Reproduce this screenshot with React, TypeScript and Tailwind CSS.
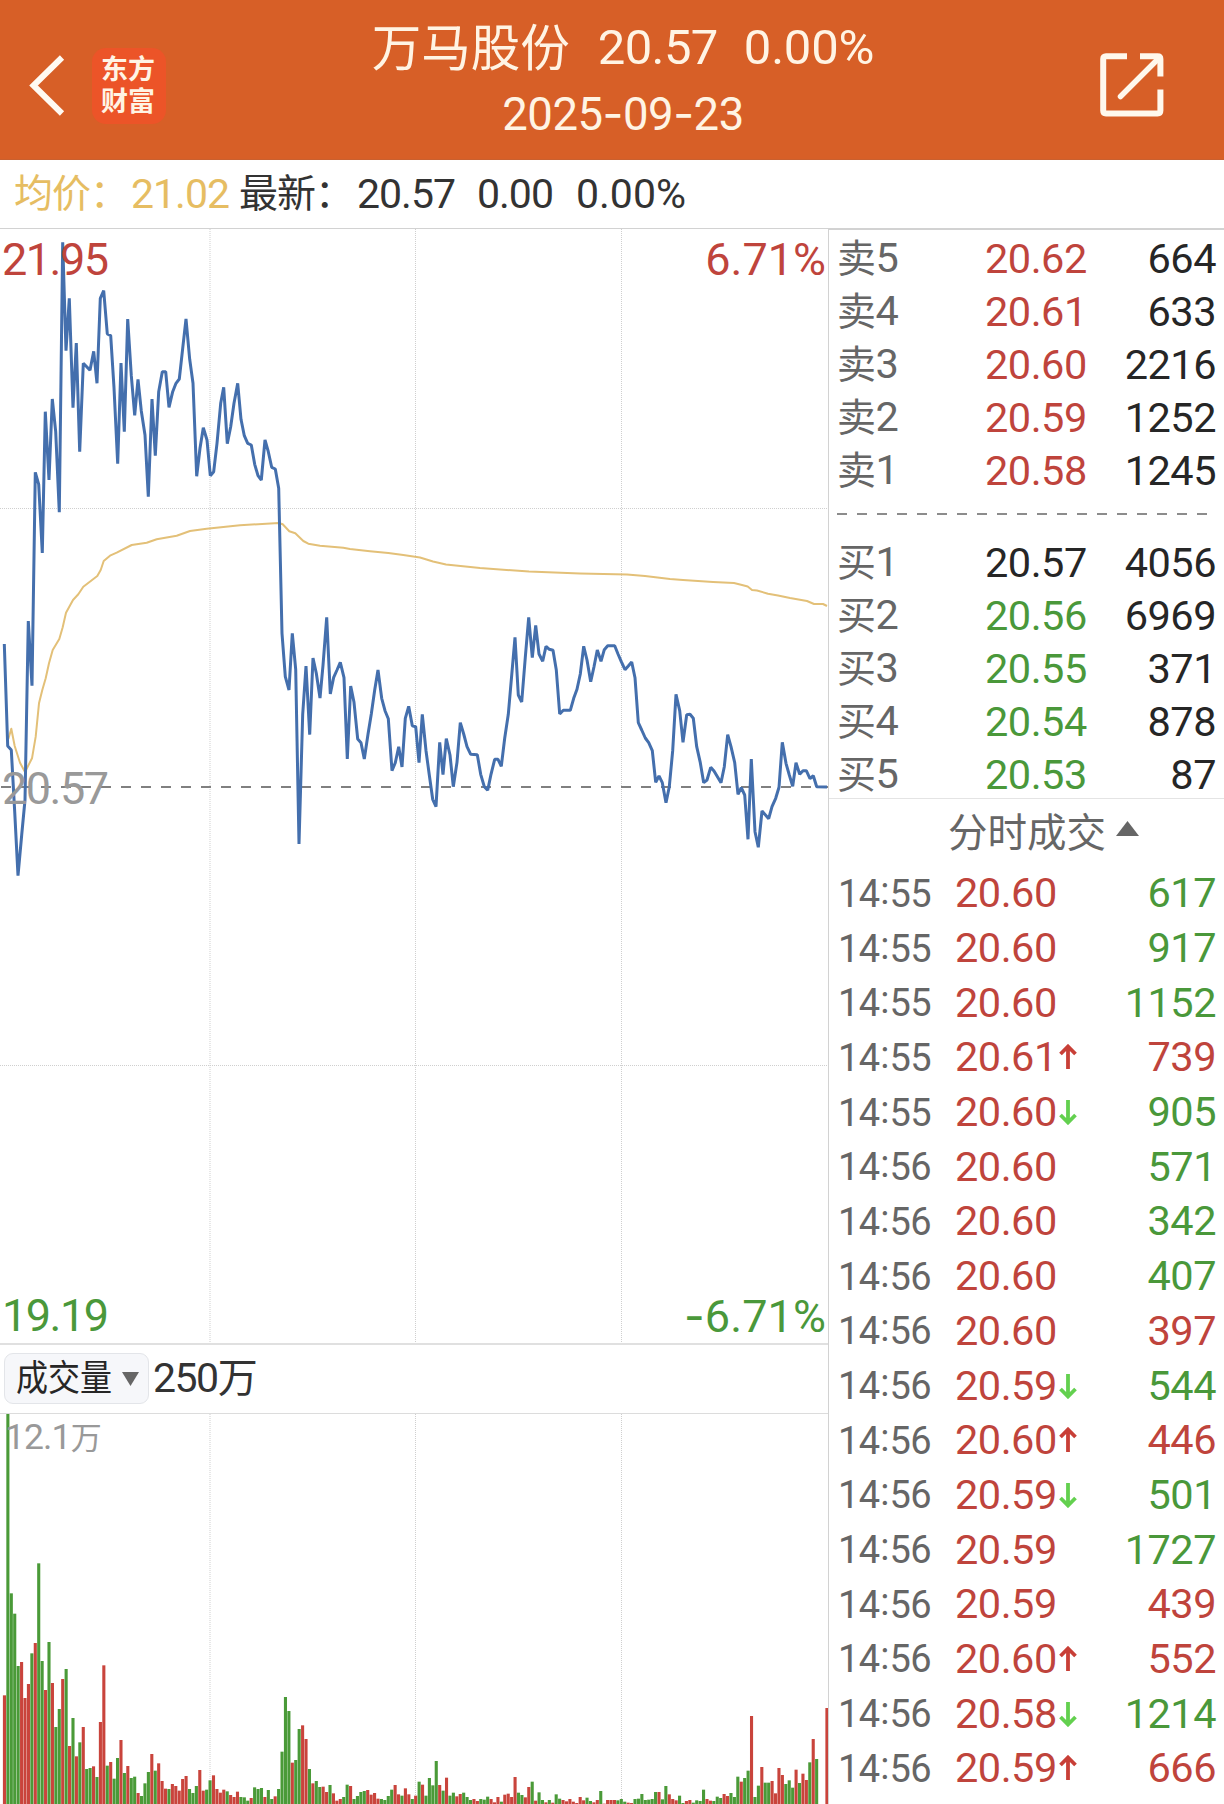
import clsx from 'clsx'

type Tone = 'up' | 'down' | 'flat'

interface Level {
  label: string
  price: string
  volume: string
  tone: Tone
}

interface Tick {
  time: string
  price: string
  volume: string
  side: 'buy' | 'sell'
  move?: 'up' | 'down'
}

const toneClass: Record<Tone, string> = {
  up: 'text-[#bf443c]',
  down: 'text-[#4a983a]',
  flat: 'text-[#262626]',
}

const asks: Level[] = [
  { label: '卖5', price: '20.62', volume: '664', tone: 'up' },
  { label: '卖4', price: '20.61', volume: '633', tone: 'up' },
  { label: '卖3', price: '20.60', volume: '2216', tone: 'up' },
  { label: '卖2', price: '20.59', volume: '1252', tone: 'up' },
  { label: '卖1', price: '20.58', volume: '1245', tone: 'up' },
]

const bids: Level[] = [
  { label: '买1', price: '20.57', volume: '4056', tone: 'flat' },
  { label: '买2', price: '20.56', volume: '6969', tone: 'down' },
  { label: '买3', price: '20.55', volume: '371', tone: 'down' },
  { label: '买4', price: '20.54', volume: '878', tone: 'down' },
  { label: '买5', price: '20.53', volume: '87', tone: 'down' },
]

const ticks: Tick[] = [
  { time: '14:55', price: '20.60', volume: '617', side: 'sell' },
  { time: '14:55', price: '20.60', volume: '917', side: 'sell' },
  { time: '14:55', price: '20.60', volume: '1152', side: 'sell' },
  { time: '14:55', price: '20.61', volume: '739', side: 'buy', move: 'up' },
  { time: '14:55', price: '20.60', volume: '905', side: 'sell', move: 'down' },
  { time: '14:56', price: '20.60', volume: '571', side: 'sell' },
  { time: '14:56', price: '20.60', volume: '342', side: 'sell' },
  { time: '14:56', price: '20.60', volume: '407', side: 'sell' },
  { time: '14:56', price: '20.60', volume: '397', side: 'buy' },
  { time: '14:56', price: '20.59', volume: '544', side: 'sell', move: 'down' },
  { time: '14:56', price: '20.60', volume: '446', side: 'buy', move: 'up' },
  { time: '14:56', price: '20.59', volume: '501', side: 'sell', move: 'down' },
  { time: '14:56', price: '20.59', volume: '1727', side: 'sell' },
  { time: '14:56', price: '20.59', volume: '439', side: 'buy' },
  { time: '14:56', price: '20.60', volume: '552', side: 'buy', move: 'up' },
  { time: '14:56', price: '20.58', volume: '1214', side: 'sell', move: 'down' },
  { time: '14:56', price: '20.59', volume: '666', side: 'buy', move: 'up' },
]

const priceLine = `
4.3,644 7.7,746 11.3,750 14.7,811.7 18,875.7 21.7,835 25,800 28.3,621 32,685.7 35.3,472.3 38.7,484.3 42.3,553
45.3,411.7 49,480 52.3,399 55.7,431.7 59.3,512.3 62.7,242.3 66,350.7 69.3,298.3 73,407.7 76.3,343 79.7,451.7
83.3,363.3 86.7,366.7 90,370.3 93.7,351.3 97,383.3 100.3,298.3 103.7,290.7 107.3,334 110.7,335.7 114,387.7
117.7,463.7 121,363 124.3,431.7 127.7,319 131.3,375.7 134.7,415.3 138,379.3 141.3,411 145,435 148.3,496.7
152,399 155.3,455.7 158.7,391.7 162.3,371.7 165.7,371.7 169,407.3 172.7,391.7 176,383.3 179.3,379 182.7,348.3
186,319 189.7,359.3 193,383.3 196.7,476.3 200,448.3 203.3,427.7 207,440 210.3,475.7 213.7,471.7 217,443.3
220.7,403.3 223.7,387.3 227.3,443.7 230.7,426.7 234,403.3 237.7,383.3 241,419.3 244.3,435.7 247.7,443.3
251.3,445 254.7,464.3 258,475.7 261.3,480 265,440 268.3,451.7 271.7,467.3 275.3,469 278.7,488.3 282,633.3
285.3,676.7 289,690 292.3,633.3 295.7,669.3 299,844 302.7,714.3 306,666 309.7,734.7 313,658 316.3,673.3
320,698 323,665.3 326.7,617.3 330.3,694 333.7,677.3 337,670 340.3,662.3 344,677.7 347.3,759 350.7,686
354,702.3 357.7,739 361,742.7 364.3,759 368,734.3 371.3,714 374.7,690 378,670 381.7,698.3 385,710.7
388.3,718.7 392,770.7 395.3,762.7 398.7,746.7 402,767 405.3,718.3 408.7,706.3 412.3,725.7 415.7,726.7
419,762.7 422.3,714.3 426,750.7 429.3,775 432.7,799.3 436,806.7 439.7,742.3 443,774.7 446.3,738.7 450,755
453.3,786.7 457,762.3 460.3,722.7 463.7,734 467,746.7 470.7,754.3 477.3,754.7 480.7,774.3 484.3,786.7
487.7,790.3 491,774.3 494.7,759.3 498,759.3 501.3,766.3 504.7,738.3 508.3,714.3 515,637.3 518.3,695
521.7,702 525.3,657.3 528.7,617.3 532.3,657.7 535.7,625.3 539,654 542.7,661.3 546,646.3 549.3,649.3
553,650.3 556.3,670 559.7,714 563.3,710.3 570.3,710.3 573.7,698.3 577,689.3 580.3,674 583.7,646.3 587,660
590.7,681.7 594,666.7 597.3,650 601,661.3 604.3,649.7 607.7,645.7 614.7,645.7 618,654 621.3,661.7 625,669.7
628.3,666 631.7,662 635,677.7 638.3,722.7 641.7,730 645.3,738 648.7,742.7 652.3,750.7 655.7,782.3 659,776
662.3,782.7 666,802.7 669.3,786.7 672.7,750.7 676,694.3 679.7,710.7 683,742.3 686.7,714.7 690,714.3
693.3,718.3 696.7,746.7 700.3,762.7 703.7,782.7 707,780 710.7,767.3 714,771 721,782.7 724.3,766.7
727.7,734.7 731,746.7 734.7,762.7 738,794.3 741.3,787.7 744.7,795 748,839.3 751.3,759 755,831.7 758.3,847.3
762,811 768.7,818.7 772,806.7 775.7,798.3 779,787.3 782.3,742.3 786,763.3 789.3,775 792.7,786.3 796,762.7
799.7,774.3 803,770.7 806.3,770.7 810,778.7 813.3,775.7 816.7,786.7 827,787`

const averageLine = `
8.3,739 11.3,728.7 14.7,746 20,762.7 25,772 32,758.3 35.7,736.7 39,703.3 42.3,690 45.7,678.3 49,663.3
52.7,650 59.3,639 62.7,627.3 66,612.7 73,600 78.3,594.3 83.3,586.7 97.3,576 100.7,570 103.7,561 110,555.7
116.7,552.7 131.7,545 146.7,542.7 156.7,539.3 176.7,535.7 190,531 206.7,528.7 240,525.3 278.7,523
282.7,524.3 289.3,531.3 295.3,533.3 303.3,541 308.3,543.7 320,545.7 343.3,547.7 350,549 370,551.3
388.3,553 403.3,555 420,557.5 433,561.5 446,564.5 480,568 529,571.5 580,573.5 627,574.5 645,576 670,579
683,580 713,582 734,583 742,585 747.7,586.5 752,590 757,590.5 768,593.7 778,595.5 790,598 807,601 814,604
823,604 827,606`

// one entry per minute: direction + height in thirds of a pixel
const volumeBars = `
r326 g1170 g632 g571 g414 r426 r318 r360 g452 r483 g722 g429 r342 g486 r363 g231 g285 r375 g405 r174
g258 r143 g185 r231 g105 g108 r113 g81 r246 r416 g115 r126 g76 g138 r192 g93 r114 g78 g82 r33
g24 g62 g96 r150 g100 r122 r69 r46 g45 r60 r54 r40 r75 r84 g45 g33 g54 r102 r40 g43
g71 r86 r45 r34 r43 g38 r27 r21 r37 g21 g20 g10 r18 g50 g45 g48 r21 g42 g15 r23
g45 g157 g321 g279 r124 g132 g225 r236 r195 g105 r62 g69 g51 r52 r36 g57 r32 r10 r15 g21
g58 r54 g15 g24 g36 g39 r42 r28 r33 r16 g15 g12 g24 g43 r57 r29 g25 r47 r29 g15
r25 g67 r58 g25 g78 g56 g129 r57 g40 r79 g25 g34 r23 r30 g34 g21 g12 r15 r9 g15
g13 g22 r15 r5 r21 g7 r28 r31 r21 r81 g34 g27 r20 r51 g67 r10 g35 g12 r5 g12
r4 g29 g16 r12 r8 r15 r7 r3 r21 r11 g19 g9 r5 r12 g39 r1 r12 r12 r12 g11
g15 g7 r4 r3 g15 g16 g30 g12 g13 g15 g36 r36 g14 g54 r29 r15 r11 g25 g3 r9
r12 g4 g11 g9 g43 r15 r10 g9 g22 g18 r30 r24 g33 g21 g82 r67 g78 g100 r264 g21
g55 r111 g64 g64 r69 r32 r108 r87 g60 g71 g49 r103 g63 r91 r72 g125 r195 g135 g0 g0
r288`
  .trim()
  .split(/\s+/)
  .map(s => ({ up: s[0] === 'r', height: Number(s.slice(1)) / 3 }))

const GRID_X = [210, 415.5, 621.5]

function Header() {
  return (
    <header className="flex h-[160px] shrink-0 border-b border-[#c9602f] bg-[#d75f27] text-[#fff4e4]">
      <div className="flex w-[184px] items-start gap-[26px] pl-[28px]">
        <svg width="38" height="64" viewBox="0 0 38 64" className="mt-[53px]" fill="none">
          <path d="M34 4.5 5.5 32.5 34 60.5" stroke="#fffaf2" strokeWidth="6" />
        </svg>
        <div className="mt-[48px] flex h-[76px] w-[74px] flex-col items-center justify-center rounded-[14px] bg-[#ec5428] pr-[2px] text-[27px] leading-[32px] font-bold">
          <span>东方</span>
          <span>财富</span>
        </div>
      </div>
      <div className="flex flex-1 flex-col items-center pt-[16px] whitespace-pre">
        <div className="flex h-[64px] items-center text-[49px] leading-[64px]">
          <span className="pt-[2px] text-[49.5px]">万马股份</span>
          <span className="ml-[28px] tracking-[-0.6px]">20.57</span>
          <span className="ml-[26px] tracking-[-0.2px]">0.00%</span>
        </div>
        <div className="h-[68px] text-[45.5px] leading-[68px] tracking-[-0.5px]">
          2025<Dash />09<Dash />23
        </div>
      </div>
      <div className="w-[162px] pt-[53px] pl-[38px]">
        <svg width="64" height="64" viewBox="0 0 64 64" fill="none" stroke="#fff8ec" strokeWidth="6">
          <path d="M27 3.2H6Q3.2 3.2 3.2 6V57.5Q3.2 60.4 6 60.4H57.5Q60.4 60.4 60.4 57.5V36.5" />
          <path d="M40 3.2H57.5Q60.4 3.2 60.4 6V23.5" />
          <path d="M59 5 20.5 43.5" strokeWidth="5.5" strokeLinecap="round" />
        </svg>
      </div>
    </header>
  )
}

function Dash() {
  return <span className="font-['Inter']">-</span>
}

function Summary() {
  return (
    <div className="flex h-[68px] shrink-0 items-center pb-[1px] pl-[14px] text-[41px] leading-[60px] tracking-[-1px] text-[#333]">
      <div className="flex w-[225px] text-[#e6bd62]">
        <span className="w-[117px] text-[39px]">均价：</span>
        <span>21.02</span>
      </div>
      <span className="w-[118px] text-[39px]">最新：</span>
      <span className="w-[120px]">20.57</span>
      <span className="w-[99px]">0.00</span>
      <span className="tracking-normal">0.00%</span>
    </div>
  )
}

function PriceChart() {
  return (
    <div className="relative h-[1117px] shrink-0 border-t border-b-2 border-t-[#d2d2d2] border-b-[#e0e0e0]">
      <svg width="828" height="1114" viewBox="0 229 828 1114" className="block" fill="none">
        <g stroke="#cfcfcf" strokeDasharray="1 1">
          {GRID_X.map(x => (
            <line key={x} x1={x} x2={x} y1="229" y2="1343" />
          ))}
          <line x1="0" x2="828" y1="508.5" y2="508.5" />
          <line x1="0" x2="828" y1="1065.5" y2="1065.5" />
        </g>
        <line x1="1" x2="828" y1="787" y2="787" stroke="#808080" strokeWidth="2" strokeDasharray="10 10" />
        <polyline points={averageLine} stroke="#e3c078" strokeWidth="2" strokeLinejoin="round" />
        <polyline points={priceLine} stroke="#446fad" strokeWidth="3" strokeLinejoin="bevel" />
      </svg>
      <div className="absolute inset-0 text-[45px] leading-[54px] tracking-[-1.5px]">
        <span className="absolute top-[4px] left-[2px] text-[#bf443c]">21.95</span>
        <span className="absolute top-[4px] right-[2px] tracking-normal text-[#bf443c]">6.71%</span>
        <span className="absolute top-[533px] left-[2px] text-[#999]">20.57</span>
        <span className="absolute top-[1060px] left-[2px] text-[#4a983a]">19.19</span>
        <span className="absolute top-[1060px] right-[2px] tracking-[0.1px] text-[#4a983a]">
          <Dash />6.71%
        </span>
      </div>
    </div>
  )
}

function VolumeBar() {
  return (
    <div className="flex h-[68px] shrink-0 items-center pb-[1px] pl-[4px] text-[#333]">
      <div className="flex h-[51px] w-[145px] items-center rounded-[9px] border border-[#e3e5e9] bg-[#f6f7fa] pl-[11px]">
        <span className="w-[106px] origin-left scale-x-[0.89] text-[36px] leading-[48px] whitespace-nowrap text-[#262626]">成交量</span>
        <svg width="17" height="14" viewBox="0 0 17 14">
          <path d="M0 0H17L8.5 14Z" fill="#666" />
        </svg>
      </div>
      <span className="ml-[4px] text-[41px] leading-[60px] tracking-[-1.5px]">
        250<span className="text-[40px]">万</span>
      </span>
    </div>
  )
}

function VolumeChart() {
  return (
    <div className="relative h-[391px] shrink-0 border-t border-[#dcdcdc]">
      <svg width="828" height="390" viewBox="0 0 828 390" className="block">
        <g stroke="#cfcfcf" strokeDasharray="1 1">
          {GRID_X.map(x => (
            <line key={x} x1={x} x2={x} y1="0" y2="390" />
          ))}
        </g>
        {volumeBars.map((bar, i) => (
          <rect
            key={i}
            x={2.9 + i * 3.427}
            y={390 - bar.height}
            width="3.1"
            height={bar.height}
            fill={bar.up ? '#c9443c' : '#4a9a38'}
          />
        ))}
      </svg>
      <span className="absolute top-0 left-[5px] text-[35.5px] leading-[46px] tracking-[-0.9px] text-[#999]">
        12.1<span className="text-[31px]">万</span>
      </span>
    </div>
  )
}

function LevelRow({ level }: { level: Level }) {
  return (
    <div className="flex h-[53.1px] items-center pr-[8px] pl-[8px] text-[41.5px] leading-[53px] tracking-[-0.5px]">
      <span className="w-[148px] text-[#666]">
        <span className="text-[39px]">{level.label[0]}</span>
        {level.label[1]}
      </span>
      <span className={toneClass[level.tone]}>{level.price}</span>
      <span className="ml-auto text-[#262626]">{level.volume}</span>
    </div>
  )
}

function MoveArrow({ move }: { move: 'up' | 'down' }) {
  return (
    <svg width="18" height="26" viewBox="0 0 18 26" fill="none" className="ml-[2px]">
      <path
        d={move === 'up' ? 'M9 25V2.5M1.5 10 9 2.5 16.5 10' : 'M9 1V23.5M1.5 16 9 23.5 16.5 16'}
        stroke={move === 'up' ? '#c83f37' : '#63d04f'}
        strokeWidth="3.8"
      />
    </svg>
  )
}

function TickRow({ tick }: { tick: Tick }) {
  const [hour, minute] = tick.time.split(':')
  return (
    <div className="flex h-[54.7px] items-center pr-[8px] pl-[9px] text-[41.5px] leading-[54px] tracking-[-0.5px]">
      <span className="w-[117px] pt-[1px] text-[38px] text-[#666]">
        {hour}
        <span className="relative -top-[3px] mx-[0.5px]">:</span>
        {minute}
      </span>
      <span className="text-[#bf443c]">{tick.price}</span>
      {tick.move && <MoveArrow move={tick.move} />}
      <span className={clsx('ml-auto', tick.side === 'buy' ? 'text-[#bf443c]' : 'text-[#4a983a]')}>{tick.volume}</span>
    </div>
  )
}

function OrderPanel() {
  return (
    <aside className="flex w-[396px] flex-col overflow-hidden border-t-2 border-l border-[#d2d2d2]">
      <div className="pt-[2px]">
        {asks.map(level => (
          <LevelRow key={level.label} level={level} />
        ))}
      </div>
      <svg width="386" height="2" className="mt-[16px] ml-[8px] shrink-0">
        <line x1="0" x2="375" y1="1" y2="1" stroke="#8c8c8c" strokeWidth="2" strokeDasharray="10 10" />
      </svg>
      <div className="mt-[18.5px] h-[265px] shrink-0 border-b border-[#e4e4e4] pt-[2px]">
        {bids.map(level => (
          <LevelRow key={level.label} level={level} />
        ))}
      </div>
      <div className="flex h-[67px] shrink-0 items-center gap-[10px] pt-[1px] pl-[119px] text-[#666]">
        <span className="pt-[2px] text-[39.5px] leading-[56px]">分时成交</span>
        <svg width="23" height="15" viewBox="0 0 23 15" className="mb-[8px]">
          <path d="M11.5 0 23 15H0Z" fill="#666" />
        </svg>
      </div>
      <div>
        {ticks.map((tick, i) => (
          <TickRow key={i} tick={tick} />
        ))}
      </div>
    </aside>
  )
}

export default function App() {
  return (
    <div className="flex h-[1804px] w-[1224px] flex-col overflow-hidden bg-white font-['Roboto','Noto_Sans_CJK_SC',sans-serif]">
      <Header />
      <Summary />
      <main className="flex h-[1576px] shrink-0">
        <section className="flex w-[828px] flex-col">
          <PriceChart />
          <VolumeBar />
          <VolumeChart />
        </section>
        <OrderPanel />
      </main>
    </div>
  )
}
